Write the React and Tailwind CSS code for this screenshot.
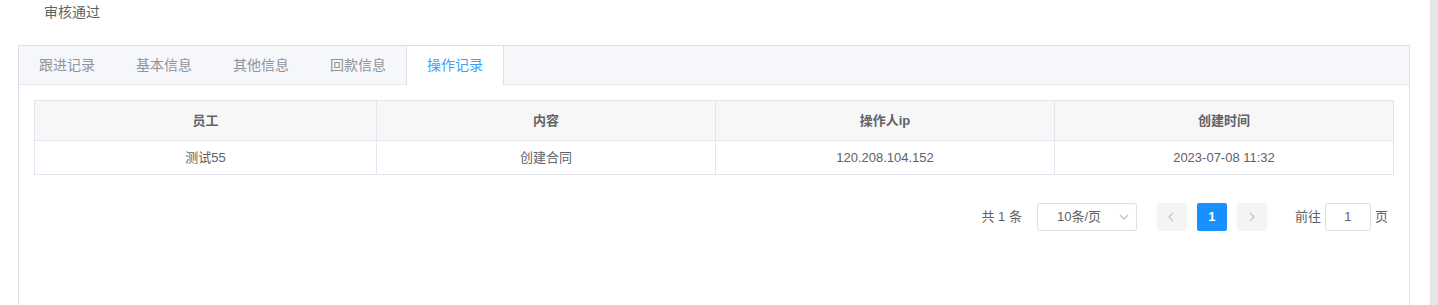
import React from "react";

const font = { fontFamily: '"Liberation Sans", "Noto Sans CJK SC", sans-serif' };

function Chevron({ dir = "left", className = "" }) {
  const d =
    dir === "left"
      ? "M7 2 L3 6 L7 10"
      : dir === "right"
      ? "M4 2 L8 6 L4 10"
      : "M2 4 L6 8 L10 4";
  return (
    <svg width="12" height="12" viewBox="0 0 12 12" className={className}>
      <path d={d} fill="none" stroke="currentColor" strokeWidth="1.3" />
    </svg>
  );
}

export default function App() {
  const tabs = ["跟进记录", "基本信息", "其他信息", "回款信息", "操作记录"];
  const cols = ["员工", "内容", "操作人ip", "创建时间"];
  const row = ["测试55", "创建合同", "120.208.104.152", "2023-07-08 11:32"];
  const widths = ["w-[342px]", "w-[339px]", "w-[339px]", "w-[339px]"];
  return (
    <div className="flex h-[305px] w-[1438px] overflow-hidden bg-white" style={font}>
      <div className="flex-1">
        <div className="h-[24px] pl-[44px] text-[14px] leading-[24px] text-[#606266]">审核通过</div>
        <div className="ml-[18px] mt-[21px] h-[300px] w-[1392px] border border-[#dcdfe6] bg-white">
          <div className="h-[39px] border-b border-[#e4e7ed] bg-[#f5f7fa]">
            <div className="-ml-px flex">
              {tabs.map((t, i) => (
                <div
                  key={t}
                  className={
                    "h-[39px] border-x px-5 text-[14px] leading-[39px] " +
                    (i > 0 ? "-ml-px " : "") +
                    (i === 4
                      ? "border-[#dcdfe6] bg-white text-[#409eff]"
                      : "border-transparent text-[#909399]")
                  }
                >
                  {t}
                </div>
              ))}
            </div>
          </div>
          <div className="p-[15px]">
            <table className="w-[1359px] table-fixed border-collapse text-[13px] text-[#606266]">
              <thead>
                <tr className="h-[40px] bg-[#f7f7f7]">
                  {cols.map((c, i) => (
                    <th key={c} className={"border border-[#e1e6ee] text-center font-bold " + widths[i]}>
                      {c}
                    </th>
                  ))}
                </tr>
              </thead>
              <tbody>
                <tr className="h-[34px]">
                  {row.map((c) => (
                    <td key={c} className="border border-[#e1e6ee] text-center">
                      {c}
                    </td>
                  ))}
                </tr>
              </tbody>
            </table>
            <div className="mt-[28px] flex h-[28px] items-center justify-end pr-[6px] text-[13px] text-[#606266]">
              <span>共 1 条</span>
              <div className="ml-[15px] flex h-[28px] w-[100px] items-center justify-between rounded-[3px] border border-[#dcdfe6] pl-[19px] pr-[6px]">
                <span>10条/页</span>
                <Chevron dir="down" className="text-[#c0c4cc]" />
              </div>
              <div className="ml-[20px] flex h-[28px] w-[30px] items-center justify-center rounded-[2px] bg-[#f4f4f5] text-[#c0c4cc]">
                <Chevron dir="left" />
              </div>
              <div className="ml-[10px] flex h-[28px] w-[30px] items-center justify-center rounded-[2px] bg-[#1890ff] font-bold text-white">
                1
              </div>
              <div className="ml-[10px] flex h-[28px] w-[30px] items-center justify-center rounded-[2px] bg-[#f4f4f5] text-[#c0c4cc]">
                <Chevron dir="right" />
              </div>
              <span className="ml-[28px]">前往</span>
              <div className="ml-[4px] flex h-[28px] w-[46px] items-center justify-center rounded-[3px] border border-[#dcdfe6]">
                1
              </div>
              <span className="ml-[4px]">页</span>
            </div>
          </div>
        </div>
      </div>
      <div className="h-full w-[8px] bg-[#e6e6e6]" />
    </div>
  );
}
